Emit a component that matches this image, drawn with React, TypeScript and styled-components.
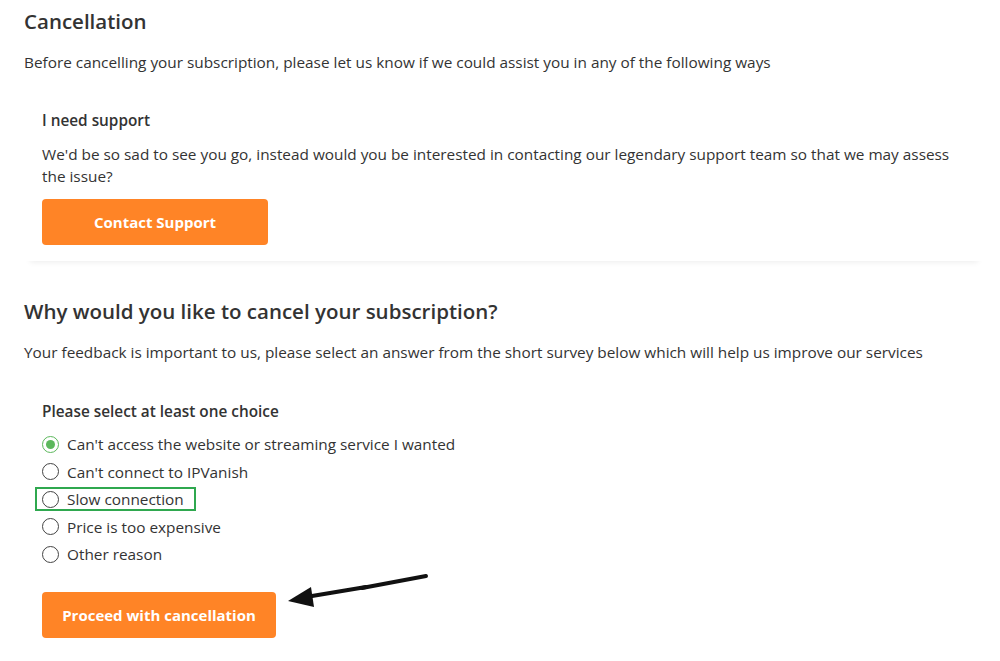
import React, { useState } from 'react';
import styled, { createGlobalStyle } from 'styled-components';

const GlobalStyle = createGlobalStyle`
  html, body {
    margin: 0;
    padding: 0;
    background: #fff;
  }
  body {
    font-family: 'Open Sans', 'Noto Sans', sans-serif;
    color: #333;
  }
`;

const Page = styled.div`
  width: 1000px;
  padding: 8px 24px 0 24px;
  box-sizing: border-box;
`;

const Heading = styled.h2`
  margin: 0;
  font-size: 20.5px;
  line-height: 26px;
  font-weight: 600;
  color: #333;
`;

const Intro = styled.p`
  margin: 17px 0 0 0;
  font-size: 15.35px;
  line-height: 22px;
  color: #333;
`;

// card with only a soft shadow at the bottom
const Card = styled.div<{ $top: number }>`
  position: relative;
  margin: ${(p) => p.$top}px 0 0 0;
  padding: 0 18px 16px 18px;
  background: #fff;
  box-shadow: 0 7px 6px -6px rgba(0, 0, 0, 0.08);
  width: 960px;
  box-sizing: border-box;
`;

const CardTitle = styled.h3`
  margin: 0;
  font-size: 15.35px;
  line-height: 22px;
  font-weight: 600;
  color: #333;
`;

const CardText = styled.p`
  margin: 12px 0 0 0;
  font-size: 15.35px;
  line-height: 22px;
  color: #333;
`;

const OrangeButton = styled.button<{ $width: number }>`
  display: block;
  width: ${(p) => p.$width}px;
  height: 46px;
  margin-top: 12px;
  border: none;
  border-radius: 4px;
  background: #ff8426;
  color: #fff;
  font-family: 'Open Sans', 'Noto Sans', sans-serif;
  font-size: 15px;
  font-weight: 700;
  cursor: pointer;
`;

const SectionSpacer = styled.div`
  height: 37px;
`;

const OptionList = styled.div`
  display: flex;
  flex-direction: column;
  align-items: flex-start;
  gap: 3.6px;
  margin-top: 10px;
`;

const Option = styled.label<{ $highlight?: boolean }>`
  display: inline-flex;
  align-items: center;
  gap: 8px;
  height: 24px;
  box-sizing: border-box;
  margin-left: -7px;
  padding: 0 10px 0 5px;
  border: 2px solid ${(p) => (p.$highlight ? '#2fa84f' : 'transparent')};
  font-size: 15.35px;
  color: #333;
  cursor: pointer;
`;

const Radio = styled.span<{ $checked: boolean }>`
  width: 17px;
  height: 17px;
  box-sizing: border-box;
  border-radius: 50%;
  border: 1.5px solid ${(p) => (p.$checked ? '#5cb85c' : '#444')};
  display: flex;
  align-items: center;
  justify-content: center;
  &::after {
    content: '';
    width: 9px;
    height: 9px;
    border-radius: 50%;
    background: ${(p) => (p.$checked ? '#5cb85c' : 'transparent')};
  }
`;

const ButtonRow = styled.div`
  position: relative;
  margin-top: 26px;
`;

const Arrow = styled.svg`
  position: absolute;
  left: 240px;
  top: -18px;
  width: 150px;
  height: 40px;
  overflow: visible;
`;

const reasons = [
  "Can't access the website or streaming service I wanted",
  "Can't connect to IPVanish",
  'Slow connection',
  'Price is too expensive',
  'Other reason',
];

export default function App() {
  const [choice, setChoice] = useState(0);

  return (
    <Page>
      <GlobalStyle />
      <Heading>Cancellation</Heading>
      <Intro>
        Before cancelling your subscription, please let us know if we could assist you in any of the following ways
      </Intro>

      <Card $top={36}>
        <CardTitle>I need support</CardTitle>
        <CardText>
          We'd be so sad to see you go, instead would you be interested in contacting our legendary support team so that we may assess the issue?
        </CardText>
        <OrangeButton $width={226}>Contact Support</OrangeButton>
      </Card>

      <SectionSpacer />
      <Heading>Why would you like to cancel your subscription?</Heading>
      <Intro>
        Your feedback is important to us, please select an answer from the short survey below which will help us improve our services
      </Intro>

      <Card $top={37}>
        <CardTitle>Please select at least one choice</CardTitle>
        <OptionList>
          {reasons.map((r, i) => (
            <Option key={r} $highlight={i === 2} onClick={() => setChoice(i)}>
              <Radio $checked={choice === i} />
              {r}
            </Option>
          ))}
        </OptionList>
        <ButtonRow>
          <OrangeButton $width={234}>Proceed with cancellation</OrangeButton>
          <Arrow viewBox="0 0 150 40">
            <line x1="144" y1="2" x2="80" y2="14" stroke="#111" strokeWidth="4" strokeLinecap="round" />
            <line x1="84" y1="13" x2="30" y2="22" stroke="#111" strokeWidth="4" strokeLinecap="round" />
            <polygon points="6,27 29,13 32,33" fill="#111" />
          </Arrow>
        </ButtonRow>
      </Card>
    </Page>
  );
}
